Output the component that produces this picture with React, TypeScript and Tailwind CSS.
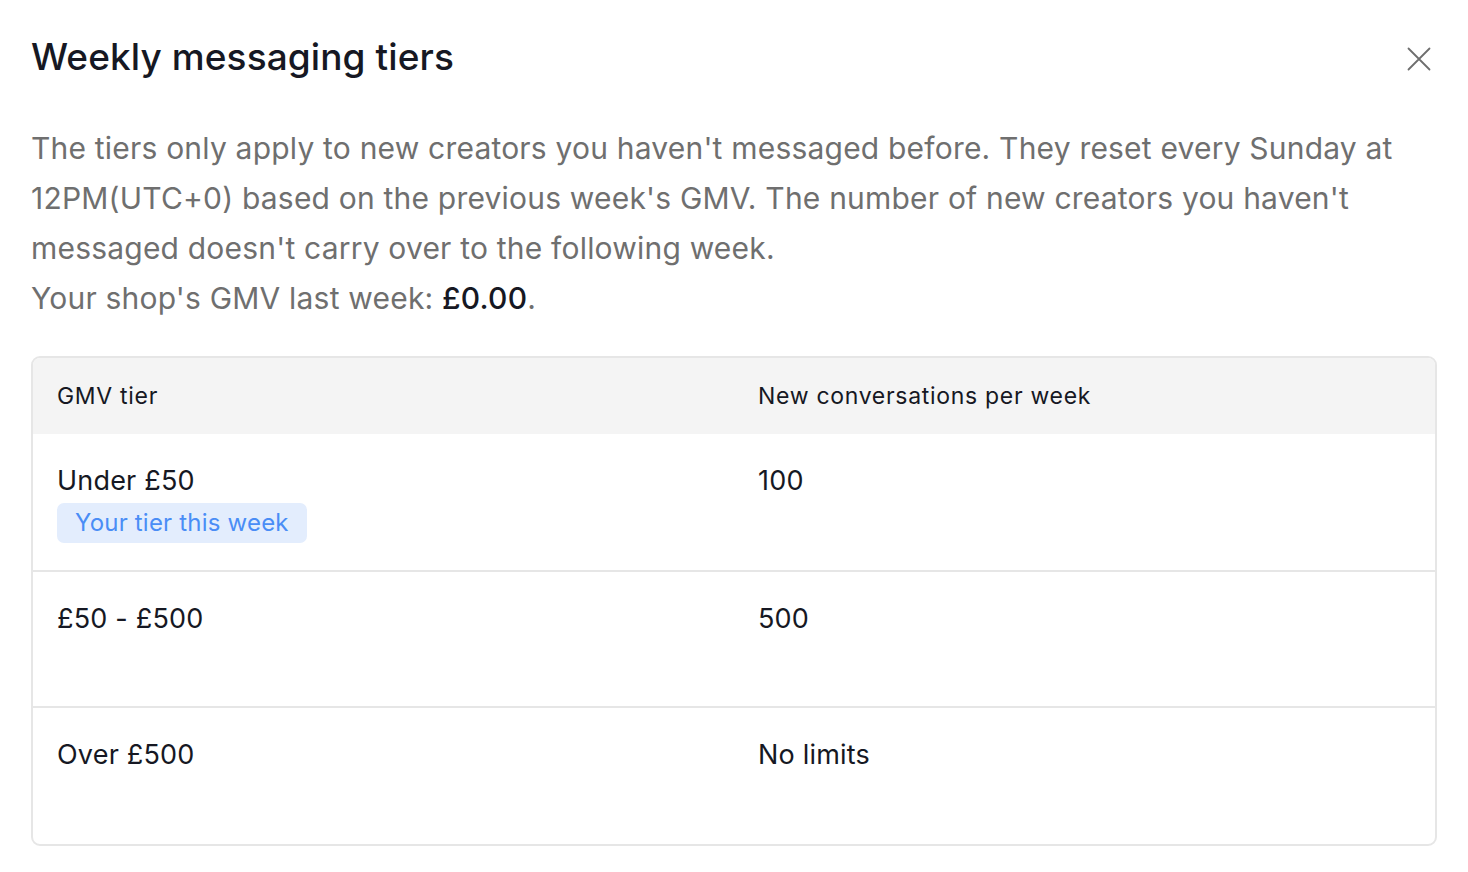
import React from "react";

const rows = [
  { tier: "Under £50", limit: "100", current: true },
  { tier: "£50 - £500", limit: "500", current: false },
  { tier: "Over £500", limit: "No limits", current: false },
];

export default function App() {
  return (
    <div
      className="w-[1468px] h-[872px] bg-white text-[#161823] overflow-hidden"
      style={{ fontFamily: "Inter, 'Noto Sans', sans-serif" }}
    >
      <div className="px-[31px] pt-[33px]">
        <div className="flex items-start justify-between">
          <h1 className="text-[37px] leading-[48px] font-medium tracking-[0.1px]">
            Weekly messaging tiers
          </h1>
          <button className="mt-[14px] mr-[6px] w-[24px] h-[24px] flex items-center justify-center text-[#6e6e6e]">
            <svg width="24" height="24" viewBox="0 0 24 24" fill="none">
              <path d="M1.5 1.5L22.5 22.5M22.5 1.5L1.5 22.5" stroke="currentColor" strokeWidth="1.8" strokeLinecap="round" />
            </svg>
          </button>
        </div>

        <p className="mt-[42px] text-[30px] leading-[50px] tracking-[0.2px] text-[#6f6f6f]">
          The tiers only apply to new creators you haven't messaged before. They reset every Sunday at
          12PM(UTC+0) based on the previous week's GMV. The number of new creators you haven't
          messaged doesn't carry over to the following week.
          <br />
          Your shop's GMV last week: <span className="text-[#161823] font-medium">£0.00</span>.
        </p>

        <div className="mt-[33px] w-[1406px] border-2 border-[#e6e6e6] rounded-[9px] overflow-hidden">
          <div className="grid grid-cols-2 h-[76px] bg-[#f4f4f4] items-center text-[23px] font-normal tracking-[0.7px]">
            <div className="pl-[24px]">GMV tier</div>
            <div className="pl-[24px]">New conversations per week</div>
          </div>
          {rows.map((r, i) => (
            <div
              key={r.tier}
              className={`grid grid-cols-2 pt-[30px] text-[27px] leading-[34px] tracking-[0.2px] ${
                i > 0 ? "border-t-2 border-[#e6e6e6]" : ""
              } ${i === rows.length - 1 ? "h-[138px]" : "h-[136px]"}`}
            >
              <div className="pl-[24px]">
                <div>{r.tier}</div>
                {r.current && (
                  <div className="mt-[5px] inline-flex h-[40px] items-center rounded-[7px] bg-[#e3edfd] px-[18px] text-[24px] text-[#4a8df6] tracking-[0.2px]">
                    Your tier this week
                  </div>
                )}
              </div>
              <div className="pl-[24px]">{r.limit}</div>
            </div>
          ))}
        </div>
      </div>
    </div>
  );
}
